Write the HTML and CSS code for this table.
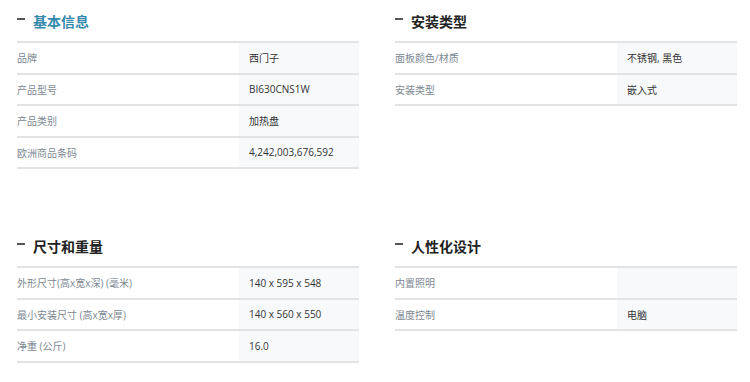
FILE: index.html
```html
<!DOCTYPE html>
<html>
  <head>
    <meta charset="UTF-8" />
    <title>产品参数</title>
    <link rel="stylesheet" href="styles.css">
  </head>

  <body>
    <div class="spec-grid">
      <div class="spec-group">
        <div class="spec-title active"><span class="dash"></span>基本信息</div>
        <div class="spec-table">
          <div class="spec-row"><div class="spec-label">品牌</div><div class="spec-value">西门子</div></div>
          <div class="spec-row"><div class="spec-label">产品型号</div><div class="spec-value">BI630CNS1W</div></div>
          <div class="spec-row"><div class="spec-label">产品类别</div><div class="spec-value">加热盘</div></div>
          <div class="spec-row"><div class="spec-label">欧洲商品条码</div><div class="spec-value">4,242,003,676,592</div></div>
        </div>
      </div>
      <div class="spec-group">
        <div class="spec-title"><span class="dash"></span>安装类型</div>
        <div class="spec-table">
          <div class="spec-row"><div class="spec-label">面板颜色/材质</div><div class="spec-value">不锈钢, 黑色</div></div>
          <div class="spec-row"><div class="spec-label">安装类型</div><div class="spec-value">嵌入式</div></div>
        </div>
      </div>
      <div class="spec-group">
        <div class="spec-title"><span class="dash"></span>尺寸和重量</div>
        <div class="spec-table">
          <div class="spec-row"><div class="spec-label">外形尺寸(高x宽x深) (毫米)</div><div class="spec-value">140 x 595 x 548</div></div>
          <div class="spec-row"><div class="spec-label">最小安装尺寸 (高x宽x厚)</div><div class="spec-value">140 x 560 x 550</div></div>
          <div class="spec-row"><div class="spec-label">净重 (公斤)</div><div class="spec-value">16.0</div></div>
        </div>
      </div>
      <div class="spec-group">
        <div class="spec-title"><span class="dash"></span>人性化设计</div>
        <div class="spec-table">
          <div class="spec-row"><div class="spec-label">内置照明</div><div class="spec-value"></div></div>
          <div class="spec-row"><div class="spec-label">温度控制</div><div class="spec-value">电脑</div></div>
        </div>
      </div>
    </div>
  </body>
</html>
```

FILE: styles.css
```css
body {
  margin: 0;
  background: #fff;
  font-family: 'Open Sans', 'Noto Sans CJK SC', sans-serif;
}

.spec-grid {
  display: grid;
  grid-template-columns: 342px 342px;
  grid-template-rows: 225px auto;
  column-gap: 36px;
  padding-left: 17px;
}

.spec-title {
  display: flex;
  align-items: center;
  height: 41px;
  font-size: 14px;
  font-weight: 700;
  color: #222;
}

.spec-title.active {
  color: #3589ad;
}

.spec-title .dash {
  display: inline-block;
  width: 8px;
  height: 1.5px;
  margin: 0 8px 3px 0;
  background: #555;
}

.spec-table {
  border-top: 2px solid #e2e3e5;
}

.spec-row {
  display: grid;
  grid-template-columns: 222px 1fr;
  height: 31.5px;
  box-sizing: border-box;
  border-bottom: 2px solid #e2e3e5;
  font-size: 10px;
}

.spec-label {
  display: flex;
  align-items: center;
  color: #7d8792;
}

.spec-value {
  display: flex;
  align-items: center;
  padding-left: 10px;
  color: #333;
  background: #f8f9fb;
}
```
